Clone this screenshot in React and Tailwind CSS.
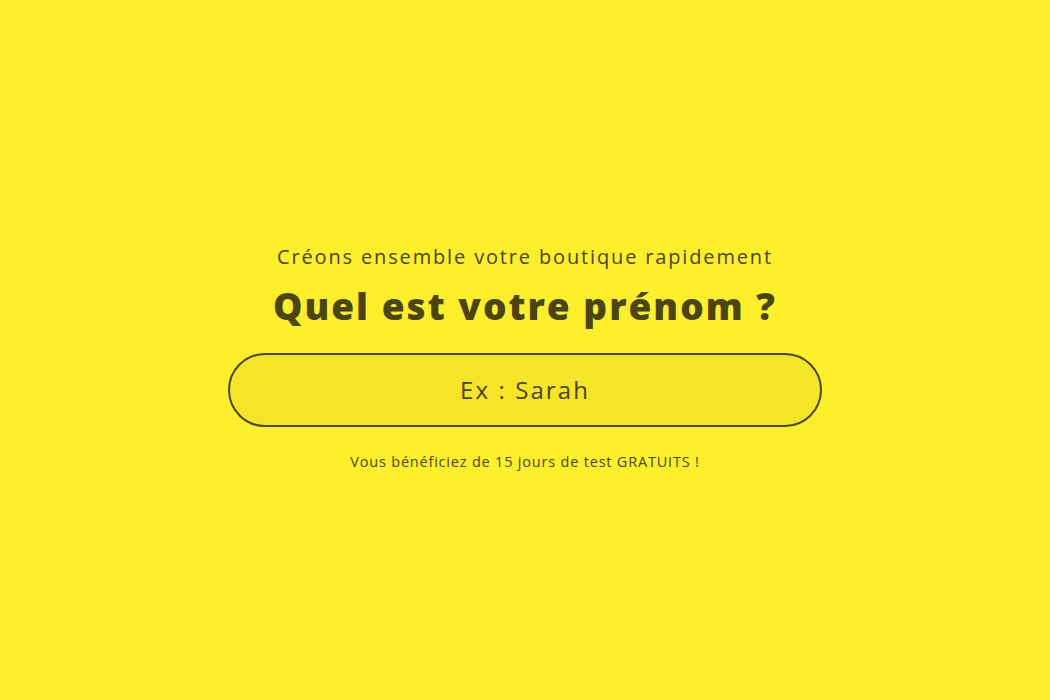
export default function App() {
  return (
    <div
      className="w-[1050px] h-[700px] bg-[#fdf02a] flex flex-col items-center text-[#4b4514]"
      style={{ fontFamily: '"Open Sans", "Noto Sans", sans-serif' }}
    >
      <p className="mt-[243px] text-[20px] leading-[28px] tracking-[1.85px]">
        Créons ensemble votre boutique rapidement
      </p>
      <h1 className="mt-[13px] text-[37px] leading-[44px] font-extrabold tracking-[2px]">
        Quel est votre prénom ?
      </h1>
      <div className="mt-[25px] w-[594px] h-[74px] rounded-full border-2 border-[#4b4514] bg-[#f4e526] flex items-center justify-center">
        <span className="text-[24px] tracking-[2.1px] text-[#4b4514]">Ex : Sarah</span>
      </div>
      <p className="mt-[25px] text-[14.5px] leading-[20px] tracking-[0.8px]">
        Vous bénéficiez de 15 jours de test GRATUITS !
      </p>
    </div>
  );
}
